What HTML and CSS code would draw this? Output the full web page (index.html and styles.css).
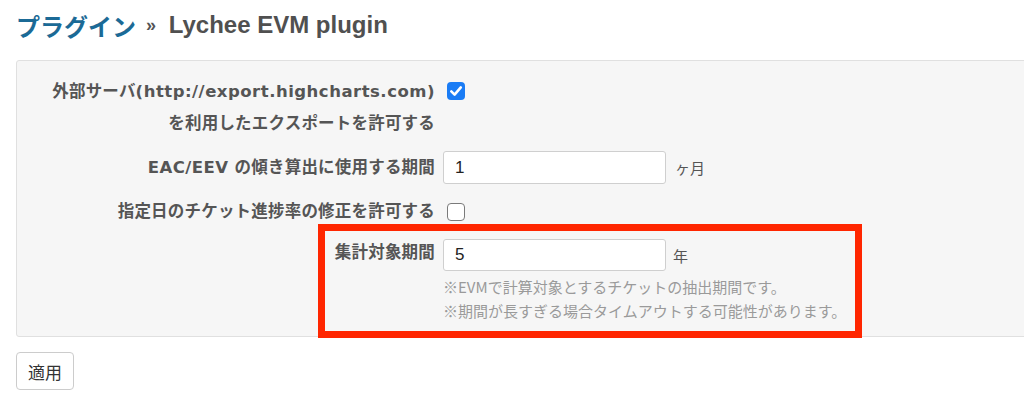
FILE: index.html
```html
<!DOCTYPE html>
<html lang="ja">
<head>
<meta charset="utf-8">
<title>Lychee EVM plugin</title>
<link rel="stylesheet" href="styles.css">
</head>
<body>
<div class="page">
  <h2 class="title"><a class="crumb" href="#">プラグイン</a> <span class="sep">»</span> Lychee EVM plugin</h2>
  <div class="box">
    <div class="row row-first">
      <label class="label label-tall">外部サーバ<span class="lat">(http://export.highcharts.com)</span><br>を利用したエクスポートを許可する</label>
      <div class="field"><span class="check checked"><svg viewBox="0 0 18 18" width="18" height="18"><path d="M4.3 9.4 L7.6 12.6 L13.8 5.4" fill="none" stroke="#fff" stroke-width="2.6" stroke-linecap="round" stroke-linejoin="round"/></svg></span></div>
    </div>
    <div class="row">
      <label class="label label-input"><span class="lat">EAC/EEV</span> の傾き算出に使用する期間</label>
      <div class="field field-input"><span class="input">1</span><span class="unit">ヶ月</span></div>
    </div>
    <div class="row">
      <label class="label label-check">指定日のチケット進捗率の修正を許可する</label>
      <div class="field field-check"><span class="check"></span></div>
    </div>
    <div class="row row-last">
      <label class="label label-top">集計対象期間</label>
      <div class="field">
        <div class="field-input"><span class="input">5</span><span class="unit unit-year">年</span></div>
        <p class="hint">※EVMで計算対象とするチケットの抽出期間です。</p>
        <p class="hint">※期間が長すぎる場合タイムアウトする可能性があります。</p>
      </div>
    </div>
    <div class="highlight"></div>
  </div>
  <button class="submit" type="button">適用</button>
</div>
</body>
</html>
```
FILE: styles.css
```css
html, body {
  margin: 0;
  padding: 0;
  background: #fff;
}
body {
  font-family: "DejaVu Sans", "Noto Sans CJK JP", sans-serif;
  color: #555;
  overflow: hidden;
}
.page {
  padding: 0 0 0 16px;
  width: 1040px;
}
.title {
  margin: 0;
  height: 60px;
  display: flex;
  align-items: center;
  gap: 8px;
  padding-bottom: 10px;
  box-sizing: border-box;
  font-family: "Liberation Sans", "Noto Sans CJK JP", sans-serif;
  font-size: 24px;
  font-weight: 700;
  color: #505050;
  white-space: pre;
}
.crumb {
  color: #1b6a96;
  text-decoration: none;
  font-family: "Noto Sans CJK JP", sans-serif;
}
.sep {
  font-size: 18px;
  color: #555;
  margin-left: 2px;
  margin-right: -2px;
}
.box {
  position: relative;
  background: #f6f6f6;
  border: 1px solid #e0e0e0;
  border-radius: 3px;
  padding: 14px 0 12px 12px;
  height: 277px;
  box-sizing: border-box;
}
.row {
  display: grid;
  grid-template-columns: 406px 1fr;
  column-gap: 8px;
  margin-top: 11px;
}
.row-first { margin-top: 0; }
.label {
  text-align: right;
  font-weight: 700;
  font-size: 16.5px;
  white-space: nowrap;
  color: #555;
  letter-spacing: 0.2px;
}
.lat { letter-spacing: 0.5px; }
.label-tall { line-height: 32px; margin-top: 1px; }
.label-input { line-height: 33px; }
.label-check { line-height: 32px; margin-top: 1px; }
.label-top { line-height: 28px; }
.field { display: block; }
.row-first .field { padding-top: 7px; padding-left: 4px; }
.field-check { padding-top: 8px; padding-left: 4px; }
.field-input {
  display: flex;
  align-items: center;
  gap: 9px;
}
.input {
  display: flex;
  align-items: center;
  width: 223px;
  height: 33px;
  box-sizing: border-box;
  padding-left: 11px;
  background: #fff;
  border: 1px solid #cfcfcf;
  border-radius: 3px;
  font-family: "Liberation Sans", sans-serif;
  font-size: 17px;
  color: #222;
}
.row-last .input { height: 32px; }
.unit {
  font-family: "Noto Sans CJK JP", sans-serif;
  font-size: 15px;
  color: #555;
}
.unit-year { margin-left: -2px; }
.check {
  display: flex;
  align-items: center;
  justify-content: center;
  width: 18px;
  height: 18px;
  box-sizing: border-box;
  border: 1.5px solid #7a7a7a;
  border-radius: 4px;
  background: #fff;
}
.check.checked {
  border: none;
  background: #1a7cf5;
}
.hint {
  margin: 0;
  line-height: 24px;
  font-family: "Noto Sans CJK JP", sans-serif;
  font-size: 15px;
  color: #9a9a9a;
  white-space: nowrap;
}
.hint:first-of-type { margin-top: 4px; }
.highlight {
  position: absolute;
  left: 301px;
  top: 163px;
  width: 544px;
  height: 114px;
  box-sizing: border-box;
  border: 7px solid #ff2600;
  pointer-events: none;
}
.submit {
  display: block;
  margin-top: 15px;
  width: 58px;
  height: 38px;
  background: #fff;
  border: 1px solid #cccccc;
  border-radius: 4px;
  font-family: "Noto Sans CJK JP", sans-serif;
  font-size: 17px;
  color: #333;
  padding: 0;
}
```
